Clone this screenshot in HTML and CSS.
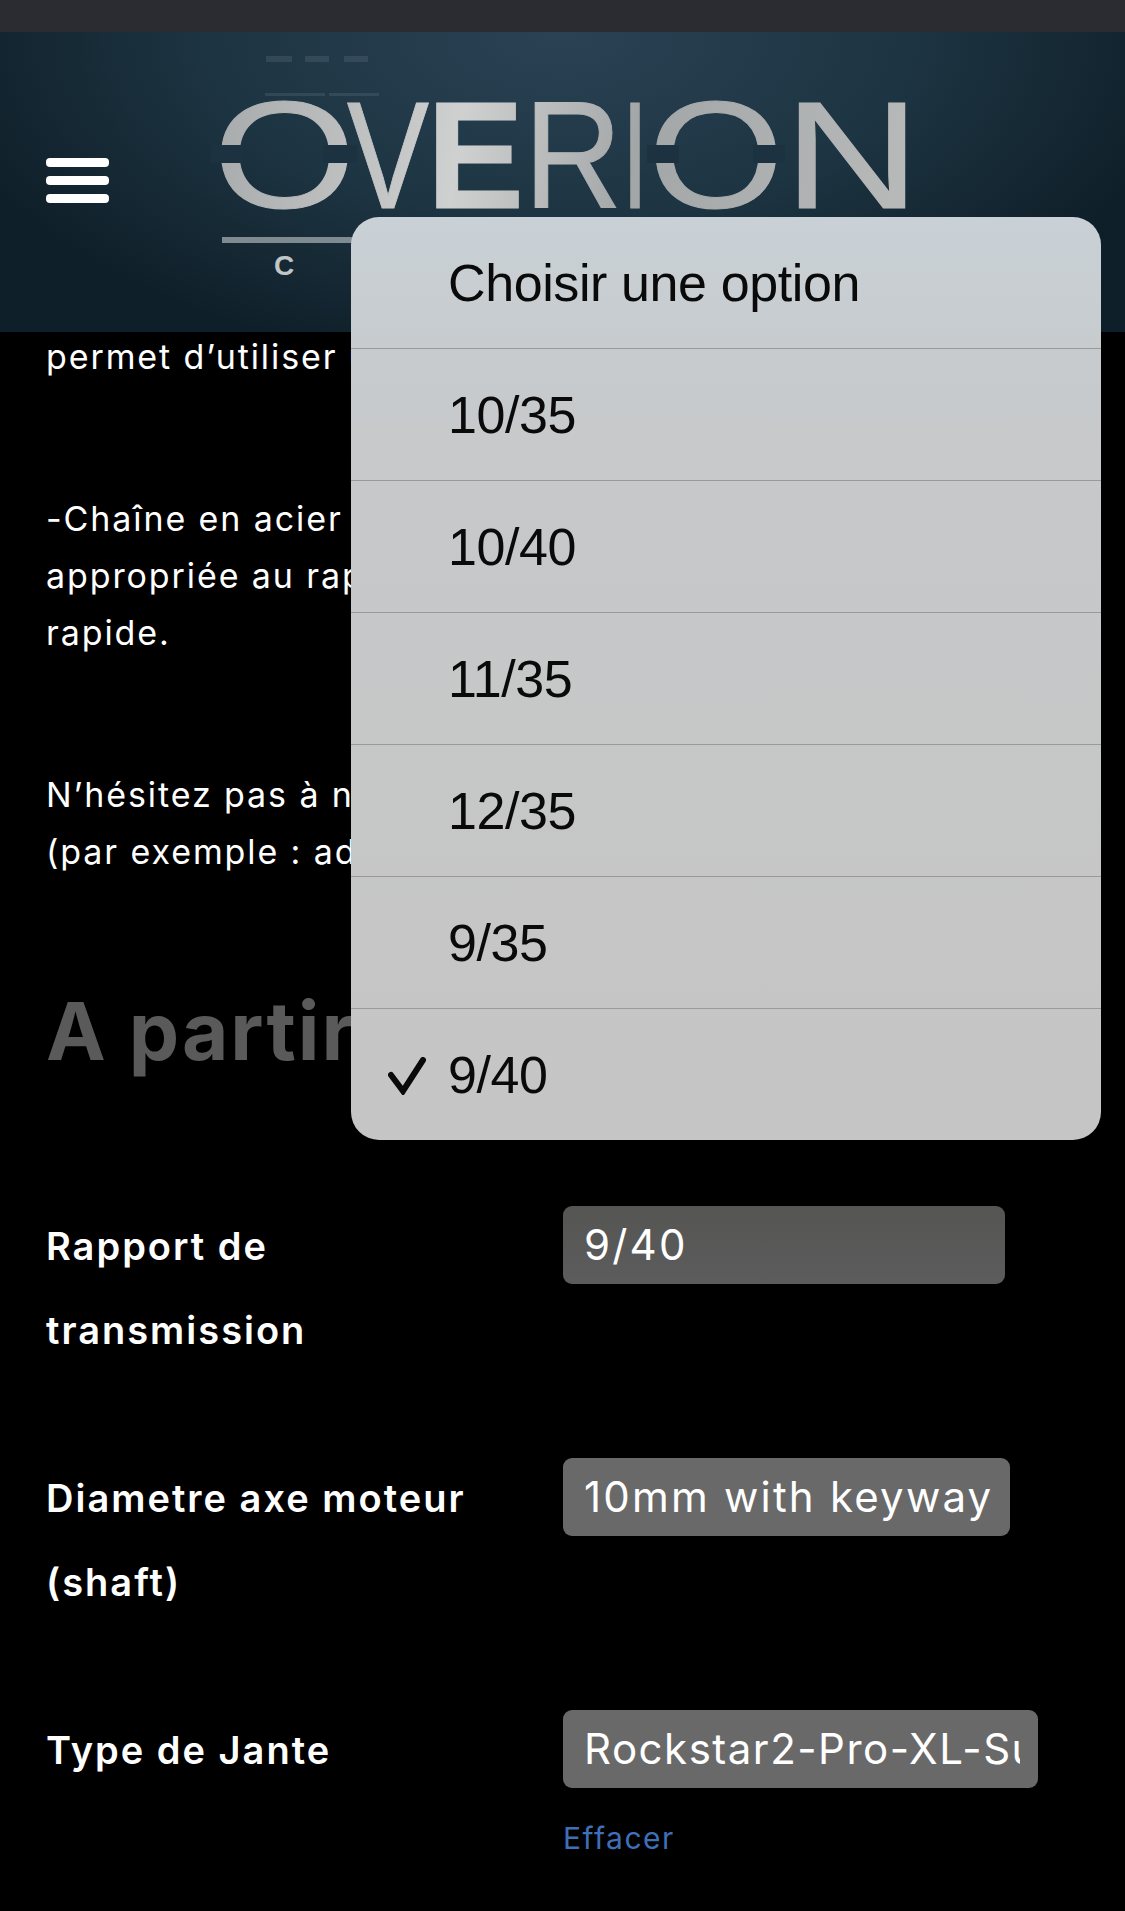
FILE: index.html
```html
<!DOCTYPE html>
<html lang="fr">
<head>
  <meta charset="UTF-8">
  <meta name="viewport" content="width=device-width, initial-scale=1.0">
  <title>Overion</title>
  <link rel="stylesheet" href="styles.css">
</head>
<body>
  <!-- Barre d'état du navigateur -->
  <div class="status-bar"></div>

  <!-- En-tête : menu et logo -->
  <header class="site-header">
    <div class="burger">
      <span></span>
      <span></span>
      <span></span>
    </div>
    <svg class="logo" width="720" height="200" viewBox="0 0 720 200" aria-label="Overion">
      <defs>
        <linearGradient id="metal" gradientUnits="userSpaceOnUse" x1="0" y1="0" x2="690" y2="110">
          <stop offset="0" stop-color="#a8abac"/>
          <stop offset="0.35" stop-color="#cfd0d0"/>
          <stop offset="0.6" stop-color="#a3a6a7"/>
          <stop offset="1" stop-color="#b8baba"/>
        </linearGradient>
      </defs>
      <!-- Petites marques floues du fond -->
      <g fill="#8e9ba4" opacity="0.18">
        <rect x="46" y="-7" width="60" height="3"/>
        <rect x="110" y="-7" width="50" height="3"/>
        <rect x="47" y="-44" width="26" height="6"/>
        <rect x="86" y="-44" width="24" height="6"/>
        <rect x="125" y="-44" width="24" height="6"/>
      </g>
      <!-- Chaque lettre garde sa largeur propre -->
      <g class="logo-word" fill="url(#metal)" stroke="url(#metal)" stroke-width="1">
        <text x="-6" y="108" textLength="143" lengthAdjust="spacingAndGlyphs">O</text>
        <text x="128" y="108" textLength="82" lengthAdjust="spacingAndGlyphs">V</text>
        <text class="heavy" x="208" y="108" textLength="97" lengthAdjust="spacingAndGlyphs">E</text>
        <text x="305" y="108" textLength="98" lengthAdjust="spacingAndGlyphs">R</text>
        <text x="403" y="108" textLength="26" lengthAdjust="spacingAndGlyphs">I</text>
        <text x="429" y="108" textLength="136" lengthAdjust="spacingAndGlyphs">O</text>
        <text x="565" y="108" textLength="136" lengthAdjust="spacingAndGlyphs">N</text>
      </g>
      <!-- Coupures du O -->
      <g fill="#1c3240">
        <rect x="-8" y="45" width="32" height="18"/>
        <rect x="104" y="45" width="34" height="18"/>
        <rect x="428" y="45" width="32" height="18"/>
        <rect x="534" y="45" width="32" height="18"/>
      </g>
      <rect x="3" y="137" width="400" height="6" fill="#7f8b90"/>
      <text class="logo-sub" x="55" y="175" fill="#c0c5c7">C</text>
    </svg>
  </header>

  <!-- Description du produit et options -->
  <main class="content">
    <p>permet d’utiliser un pignon</p>
    <p>-Chaîne en acier NZ<br>appropriée au rapport<br>rapide.</p>
    <p>N’hésitez pas à nous contacter<br>(par exemple : adaptation)</p>

    <h2>A partir de</h2>

    <div class="option-row">
      <div class="option-label">Rapport de transmission</div>
      <div class="option-value">
        <div class="fake-select dim w-1"><span>9/40</span></div>
      </div>
    </div>

    <div class="option-row">
      <div class="option-label">Diametre axe moteur (shaft)</div>
      <div class="option-value">
        <div class="fake-select w-2"><span>10mm with keyway</span></div>
      </div>
    </div>

    <div class="option-row">
      <div class="option-label">Type de Jante</div>
      <div class="option-value">
        <div class="fake-select w-3"><span>Rockstar2-Pro-XL-Supermoto</span></div>
        <a class="clear-link" href="#">Effacer</a>
      </div>
    </div>
  </main>

  <!-- Liste déroulante ouverte, par-dessus la page -->
  <ul class="picker">
    <li>Choisir une option</li>
    <li>10/35</li>
    <li>10/40</li>
    <li>11/35</li>
    <li>12/35</li>
    <li>9/35</li>
    <li class="checked">
      <svg class="check" width="38" height="38" viewBox="0 0 38 38">
        <path d="M3 18 L15 34 L35 3" fill="none" stroke="#0a0a0a" stroke-width="6" stroke-linecap="round" stroke-linejoin="miter"/>
      </svg>
      9/40
    </li>
  </ul>
</body>
</html>
```

FILE: styles.css
```css
/* Page : fond noir, taille fixe de l'écran */
html, body {
  margin: 0;
  padding: 0;
}

body {
  position: relative;
  width: 1125px;
  height: 1911px;
  overflow: hidden;
  background-color: #000000;
  color: #ffffff;
  font-family: "Inter", "Liberation Sans", sans-serif;
}

.status-bar {
  height: 32px;
  background-color: #2a2c31;
}

/* En-tête */
.site-header {
  display: flex;
  align-items: flex-start;
  height: 300px;
  background: radial-gradient(ellipse 640px 340px at 560px 0, #2a4254 0%, #1d3442 55%, #0f1f29 100%);
}

.burger {
  display: flex;
  flex-direction: column;
  gap: 9px;
  width: 63px;
  margin: 126px 0 0 46px;
}

.burger span {
  height: 9px;
  border-radius: 4px;
  background-color: #ffffff;
}

.logo {
  margin: 68px 0 0 110px;
  overflow: visible;
}

.logo-word {
  font-family: "Liberation Sans", sans-serif;
  font-size: 153px;
}

.logo-word .heavy {
  font-weight: 700;
}

.logo-sub {
  font-family: "Liberation Sans", sans-serif;
  font-size: 28px;
  font-weight: 700;
}

/* Contenu */
.content {
  margin-top: -4px;
  padding: 0 46px;
  font-size: 34px;
  letter-spacing: 1.9px;
  line-height: 57px;
}

.content p {
  margin: 0 0 105px;
}

.content h2 {
  margin: -4px 0 125px;
  color: #5a5a5a;
  font-size: 80px;
  font-weight: 700;
  letter-spacing: 2px;
  line-height: 100px;
}

.option-row {
  display: grid;
  grid-template-columns: 517px 1fr;
  height: 252px;
}

.option-label {
  width: 440px;
  margin-top: -2px;
  font-size: 38px;
  font-weight: 600;
  letter-spacing: 2px;
  line-height: 84px;
}

.fake-select {
  height: 78px;
  padding: 0 18px 0 21px;
  border-radius: 9px;
  background-color: #696969;
  font-size: 42px;
  letter-spacing: 2.2px;
  line-height: 78px;
  box-sizing: border-box;
}

.fake-select span {
  display: block;
  overflow: hidden;
  white-space: nowrap;
}

.fake-select.dim {
  background: linear-gradient(#555554, #5c5c5c);
}

.w-1 { width: 442px; }
.w-2 { width: 447px; }
.w-3 { width: 475px; letter-spacing: 1.5px; }

.clear-link {
  display: block;
  margin-top: 28px;
  color: #3f6fb8;
  font-size: 30px;
  letter-spacing: 1.5px;
  line-height: 44px;
  text-decoration: none;
}

/* Liste déroulante */
.picker {
  position: absolute;
  top: 217px;
  left: 351px;
  width: 750px;
  margin: 0;
  padding: 0;
  overflow: hidden;
  border-radius: 28px;
  background: linear-gradient(#c9d1d6 0%, #c7cbce 15%, #c7c8c9 30%, #c5c5c5 100%);
  color: #0a0a0a;
  font-family: "Liberation Sans", sans-serif;
  font-size: 52px;
  letter-spacing: -0.4px;
  list-style: none;
}

.picker li {
  position: relative;
  height: 132px;
  padding-left: 97px;
  border-bottom: 1px solid #9a9a9a;
  line-height: 133px;
  box-sizing: border-box;
}

.picker li:last-child {
  height: 131px;
  border-bottom: none;
}

.check {
  position: absolute;
  top: 48px;
  left: 37px;
}
```
